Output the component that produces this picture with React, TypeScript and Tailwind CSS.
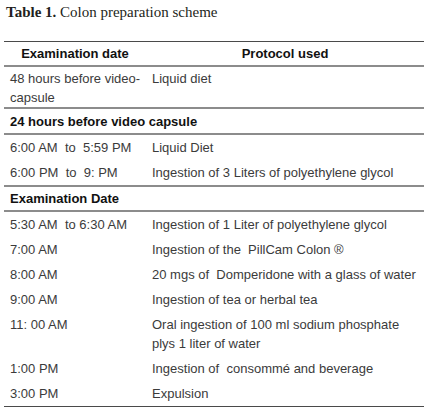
import React from "react";

const GRAY = "border-b-2 border-b-[#8c8c8c]";

export default function App() {
  const cell1 = "pl-[6px] pr-[4px]";
  const cell2 = "pl-[6px]";

  const Single = ({ a, b, line }: { a: React.ReactNode; b: React.ReactNode; line?: string }) => (
    <div className={`grid grid-cols-[142px_1fr] py-[3px] ${line ?? ""}`}>
      <div className={cell1}>{a}</div>
      <div className={cell2}>{b}</div>
    </div>
  );

  const Section = ({ children, h }: { children: React.ReactNode; h: string }) => (
    <div className={`flex items-center pl-[6px] font-bold text-[#111] ${h} ${GRAY}`}>{children}</div>
  );

  return (
    <div className="w-[430px] h-[415px] bg-white overflow-hidden">
      <div
        className="pl-[6px] pt-[3px] h-[41px] text-[15px] leading-[18px] text-[#231f20]"
        style={{ fontFamily: '"Liberation Serif", serif' }}
      >
        <span className="font-bold">Table 1.</span> Colon preparation scheme
      </div>
      <div
        className="ml-[4px] w-[420px] border-t-[1.5px] border-t-[#4a4a4a] border-b-[1.5px] border-b-[#4a4a4a] text-[13px] leading-[19px] text-[#3b3b3b]"
        style={{ fontFamily: '"Liberation Sans", Arial, sans-serif' }}
      >
        <div className={`grid grid-cols-[142px_1fr] h-[25px] items-center font-bold text-[#111] ${GRAY}`}>
          <div className="text-center">Examination date</div>
          <div className="text-center">Protocol used</div>
        </div>
        <div className={`grid grid-cols-[142px_1fr] pt-[2px] h-[42px] ${GRAY}`}>
          <div className={cell1}>48 hours before video-capsule</div>
          <div className={cell2}>Liquid diet</div>
        </div>
        <Section h="h-[26px]">24 hours before video capsule</Section>
        <Single a={"6:00 AM\u00a0 to\u00a0 5:59 PM"} b="Liquid Diet" />
        <Single a={"6:00 PM\u00a0 to\u00a0 9: PM"} b="Ingestion of 3 Liters of polyethylene glycol" line={GRAY} />
        <Section h="h-[25px]">Examination Date</Section>
        <Single a={"5:30 AM\u00a0 to 6:30 AM"} b="Ingestion of 1 Liter of polyethylene glycol" />
        <Single a="7:00 AM" b={"Ingestion of the\u00a0 PillCam Colon \u00ae"} />
        <Single a="8:00 AM" b={"20 mgs of\u00a0 Domperidone with a glass of water"} />
        <Single a="9:00 AM" b="Ingestion of tea or herbal tea" />
        <Single
          a="11: 00 AM"
          b={
            <>
              Oral ingestion of 100 ml sodium phosphate
              <br />
              plys 1 liter of water
            </>
          }
        />
        <Single a="1:00 PM" b={"Ingestion of\u00a0 consommé and beverage"} />
        <Single a="3:00 PM" b="Expulsion" />
      </div>
    </div>
  );
}
